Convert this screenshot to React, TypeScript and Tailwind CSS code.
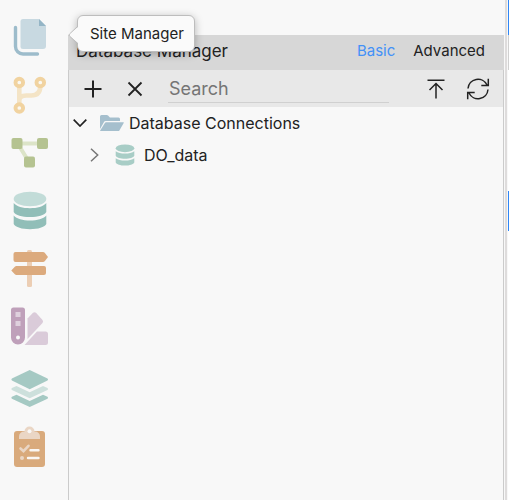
import React from "react";

function SideButton({ label, children }: { label: string; children: React.ReactNode }) {
  return (
    <button type="button" aria-label={label} className="block h-[58px] w-full shrink-0">
      <svg width="60" height="58" viewBox="0 0 60 58" fill="none" aria-hidden="true">
        {children}
      </svg>
    </button>
  );
}

function Sidebar() {
  return (
    <nav aria-label="Managers" className="flex w-[68px] shrink-0 flex-col pt-2">
      <SideButton label="Site Manager">
        <path d="M23 11h16l7 7v20a3 3 0 0 1-3 3H23a2.500 2.500 0 0 1-2.500-2.500v-25A2.500 2.500 0 0 1 23 11z" fill="#c8d9e1" />
        <path d="M39 11l7 7h-7z" fill="#94b5c6" />
        <path d="M15.500 19.500v19a7.500 7.500 0 0 0 7.500 7.500h14.500" stroke="#9dbccb" strokeWidth="3.400" strokeLinecap="round" />
      </SideButton>
      <SideButton label="Git Manager">
        <path d="M19.300 20v20M40.300 20c0 7-3.500 9.500-9 9.500h-5c-4 0-7 1.500-7 5" stroke="#f4e4c6" strokeWidth="4.600" />
        <g stroke="#f1d3a0" strokeWidth="3.900" fill="#faf8f2">
          <circle cx="19.300" cy="16.500" r="3.800" />
          <circle cx="40.300" cy="16.500" r="3.800" />
          <circle cx="19.300" cy="42" r="3.800" />
        </g>
      </SideButton>
      <SideButton label="Workflows">
        <path d="M17 19.500h25M18 20l11 18" stroke="#dce4c8" strokeWidth="4" />
        <g fill="#b5c391">
          <rect x="11.500" y="14" width="11" height="11" rx="2" />
          <rect x="37" y="14" width="11" height="11" rx="2" />
          <rect x="24" y="32.500" width="11" height="11" rx="2" />
        </g>
      </SideButton>
      <SideButton label="Database Manager">
        <ellipse cx="30" cy="17" rx="16.300" ry="7.300" fill="#c2dcd8" />
        <path d="M13.700 21c3 3.500 9 5.200 16.300 5.200s13.300-1.700 16.300-5.200v9c-2 3.200-8 5-16.300 5s-14.300-1.800-16.300-5z" fill="#91beb8" />
        <path d="M13.700 33.500c3 3.300 9 5 16.300 5s13.300-1.700 16.300-5v8.500c-2 3.300-8 5.200-16.300 5.200s-14.300-1.900-16.300-5.200z" fill="#91beb8" />
      </SideButton>
      <SideButton label="Routes">
        <rect x="27" y="10" width="5" height="37" rx="1.500" fill="#ecceb4" />
        <path d="M15.500 12H43q1 0 1.700.8L48 17l-3.300 4.200q-.7.800-1.700.8H15.500a2 2 0 0 1-2-2v-6a2 2 0 0 1 2-2z" fill="#dcaa7d" />
        <path d="M44 26H16.500q-1 0-1.700.8L11.300 30.500l3.500 3.700q.7.800 1.700.8H44a2 2 0 0 0 2-2v-5a2 2 0 0 0-2-2z" fill="#dcaa7d" />
      </SideButton>
      <SideButton label="Styles">
        <path d="M13.500 9.500h9a2.500 2.500 0 0 1 2.500 2.500v27.500a7 7 0 0 1-14 0V12a2.500 2.500 0 0 1 2.500-2.500z" fill="#bfa0ba" />
        <rect x="15.500" y="14" width="5" height="5" fill="#dfd0dd" />
        <rect x="15.500" y="23" width="5" height="5" fill="#dfd0dd" />
        <circle cx="18" cy="39.500" r="2" fill="#f8f8f8" />
        <path d="M27.500 20.500l5.500-5.700q1.500-1.200 3 0l6.500 7.200q1.200 1.500 0 3L27.500 41z" fill="#dacbd9" />
        <path d="M24.500 47L37 33.500h8.500a2.500 2.500 0 0 1 2.500 2.500v8.500a2.500 2.500 0 0 1-2.500 2.500z" fill="#dacbd9" />
      </SideButton>
      <div className="mt-1">
        <SideButton label="Assets">
          <path d="M29.700 10l17.800 8.500q1.200 1 0 1.900l-17.800 8.800-17.800-8.800q-1.200-.9 0-1.900z" fill="#a5c9c3" />
          <path d="M16.500 26l13.200 6.300L43 26l4.500 2q1.200 1 0 1.900l-17.800 8.300-17.800-8.300q-1.200-.9 0-1.900z" fill="#cde0dc" />
          <path d="M16.500 34.800l13.200 6.300L43 34.800l4.500 2q1.200 1 0 1.900L29.700 47l-17.800-8.300q-1.200-.9 0-1.900z" fill="#a5c9c3" />
        </SideButton>
        <SideButton label="Project Settings">
          <rect x="14" y="13" width="31" height="36" rx="3" fill="#d9aa7c" />
          <path d="M19 21v-2.500a5 5 0 0 1 5-5h.500a5 5 0 0 1 10 0h.500a5 5 0 0 1 5 5V21z" fill="#ead6c5" />
          <circle cx="29.500" cy="13.300" r="2" fill="#f9f8f7" />
          <path d="M20.500 30.500l3 2.700 5-5.400" stroke="#ead6c5" strokeWidth="2.600" strokeLinecap="round" />
          <path d="M30.500 32.300h8M28 40h10.500" stroke="#faf7f4" strokeWidth="2.400" strokeLinecap="round" />
          <circle cx="22" cy="40" r="2" fill="#ead6c5" />
        </SideButton>
      </div>
    </nav>
  );
}

function Tooltip() {
  return (
    <div role="tooltip" className="absolute top-[15px] left-[77px] z-10 h-[37px] rounded-md border border-[#bdbdbd] bg-[#fafafa] pr-[10px] pl-3 text-[15px] leading-[35px] shadow-[0_2px_8px_rgba(0,0,0,0.28)]">
      <svg className="absolute top-[9px] -left-[10px]" width="11" height="20" viewBox="0 0 11 20" fill="none" aria-hidden="true">
        <path d="M11 0v20L10 18 1.500 11q-1-1 0-2L10 2z" fill="#fafafa" />
        <path d="M9.500 0v1.500L1.500 9q-1 1 0 2l8 7.500V20" stroke="#bdbdbd" />
      </svg>
      Site Manager
    </div>
  );
}

function Toolbar() {
  return (
    <div className="flex h-[37px] items-center bg-[#e8e8e8] pr-[13px] pl-3">
      <button type="button" aria-label="Add connection" className="w-6">
        <svg className="mx-auto" width="18" height="18" viewBox="0 0 18 18" stroke="#222" strokeWidth="2" aria-hidden="true">
          <path d="M9 .5v17M.5 9h17" />
        </svg>
      </button>
      <button type="button" aria-label="Remove connection" className="ml-[18px] w-6">
        <svg className="mx-auto" width="16" height="16" viewBox="0 0 16 16" stroke="#222" strokeWidth="1.800" aria-hidden="true">
          <path d="M1.500 1.500l13 13M14.500 1.500l-13 13" />
        </svg>
      </button>
      <input type="text" aria-label="Search" placeholder="Search" className="ml-[21px] h-7 w-0 max-w-[221px] flex-1 border-b border-[#d0d0d0] bg-transparent pt-px pl-px text-lg outline-none placeholder:text-[#757575]" />
      <button type="button" aria-label="Import" className="ml-auto w-6">
        <svg className="mx-auto" width="18" height="20" viewBox="0 0 18 20" fill="none" stroke="#222" strokeWidth="1.500" aria-hidden="true">
          <path d="M.5 1.200h17M9 19.500V5M2.500 11L9 4.500l6.500 6.500" />
        </svg>
      </button>
      <button type="button" aria-label="Refresh" className="ml-[18px] w-6">
        <svg className="mx-auto" width="24" height="24" viewBox="0 0 24 24" fill="none" stroke="#222" strokeWidth="1.500" aria-hidden="true">
          <path d="M2 11.500a10 10 0 0 1 19-3.500M22.300 1.800v6.700h-7M22 12.500a10 10 0 0 1-19 3.500M1.700 22.200v-6.700h7" />
        </svg>
      </button>
    </div>
  );
}

function Tree() {
  return (
    <ul role="tree" aria-label="Databases">
      <li role="treeitem" aria-expanded="true">
        <button type="button" className="flex h-8 w-full items-center pl-1">
          <svg width="14" height="8" viewBox="0 0 14 8" fill="none" stroke="#222" strokeWidth="1.700" aria-hidden="true">
            <path d="M.7.700L7 7l6.300-6.300" />
          </svg>
          <svg className="ml-3 shrink-0" width="26" height="18" viewBox="0 0 26 18" aria-hidden="true">
            <path d="M1 15V2.500A1.500 1.500 0 0 1 2.500 1h5.200q.8 0 1.400.6l1.800 1.900h8.600A1.500 1.500 0 0 1 21 5v2H6.500q-1 0-1.500.9z" fill="#a5bfcd" />
            <path d="M1.200 16.500L6 8.800q.4-.6 1-.6h17.300q.9 0 .4.900l-4.300 7.300q-.4.600-1 .6H1.500q-.6 0-.3-.5z" fill="#a5bfcd" />
          </svg>
          <span className="ml-1">Database Connections</span>
        </button>
        <ul role="group">
          <li role="treeitem">
            <button type="button" className="flex h-8 w-full items-center pl-[21px]">
              <svg width="9" height="14" viewBox="0 0 9 14" fill="none" stroke="#777" strokeWidth="1.500" aria-hidden="true">
                <path d="M1 .7L7.700 7 1 13.300" />
              </svg>
              <svg className="ml-4 shrink-0" width="20" height="22" viewBox="0 0 20 22" fill="#a8cdc6" aria-hidden="true">
                <ellipse cx="10" cy="4.300" rx="9.300" ry="3.900" />
                <path d="M.7 7.300c2 1.600 5.500 2.300 9.300 2.300s7.300-.7 9.300-2.300v4.400c-1 1.900-4.500 3-9.300 3s-8.300-1.100-9.300-3z" />
                <path d="M.7 14.200c2 1.600 5.500 2.300 9.300 2.300s7.300-.7 9.300-2.300v4.300c-1 1.900-4.500 3.100-9.300 3.100s-8.300-1.200-9.300-3.100z" />
              </svg>
              <span className="ml-[9px]">DO_data</span>
            </button>
          </li>
        </ul>
      </li>
    </ul>
  );
}

export default function App() {
  return (
    <div className="relative flex h-screen overflow-hidden bg-[#f8f8f8] font-['Inter',sans-serif] text-base text-[#222]">
      <Sidebar />
      <main className="flex min-w-0 flex-1 flex-col pt-[35px]">
        <header className="flex h-[35px] shrink-0 items-center bg-[#d7d7d7] pr-[19px] pb-[2px] pl-2">
          <h1 className="text-[17px]">Database Manager</h1>
          <button type="button" className="ml-auto text-[15px] text-[#4391f7]">Basic</button>
          <button type="button" className="ml-[18px] text-[15px]">Advanced</button>
        </header>
        <section className="flex-1 border-x border-[#cbcbcb]">
          <Toolbar />
          <Tree />
        </section>
      </main>
      <div className="ml-px w-[2px] bg-[#dedcdc]" />
      <div className="ml-px flex w-px flex-col">
        <div className="h-[35px] bg-[#2f86f6]" />
        <div className="h-[35px] bg-[#d0d0d0]" />
        <div className="h-[121px] bg-white" />
        <div className="h-10 bg-[#2f86f6]" />
        <div className="flex-1 bg-white" />
      </div>
      <Tooltip />
    </div>
  );
}
